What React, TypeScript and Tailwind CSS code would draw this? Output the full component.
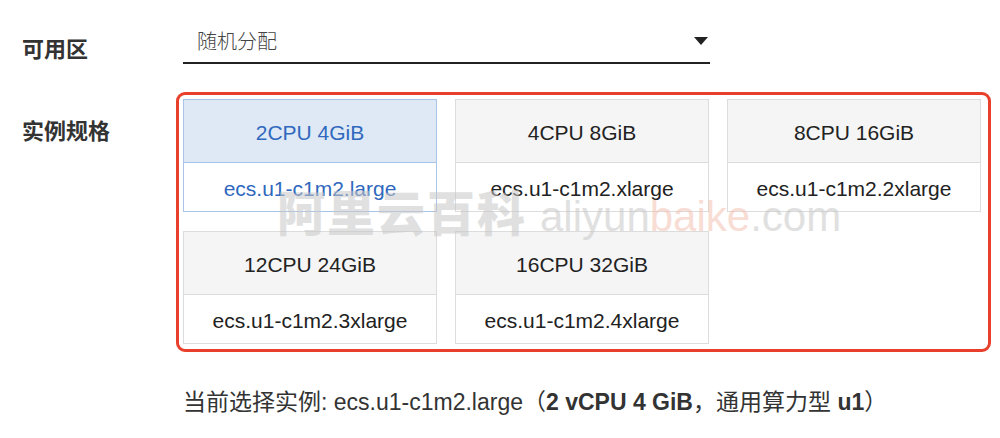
const specs = [
  { cpu: "2CPU 4GiB", name: "ecs.u1-c1m2.large", selected: true },
  { cpu: "4CPU 8GiB", name: "ecs.u1-c1m2.xlarge" },
  { cpu: "8CPU 16GiB", name: "ecs.u1-c1m2.2xlarge" },
  { cpu: "12CPU 24GiB", name: "ecs.u1-c1m2.3xlarge" },
  { cpu: "16CPU 32GiB", name: "ecs.u1-c1m2.4xlarge" },
];

const font = "font-['Liberation_Sans','Noto_Sans_CJK_SC',sans-serif]";

export default function App() {
  return (
    <div
      className={`relative w-[1000px] h-[438px] bg-white overflow-hidden ${font} text-[#333]`}
    >
      {/* Zone */}
      <div className="flex items-start pt-[24px]">
        <div className="w-[183px] pl-[22px] pt-[11px] text-[22px] font-bold text-[#333] leading-[30px]">
          可用区
        </div>
        <div className="w-[527px] h-[40px] border-b-2 border-[#222] flex items-center justify-between pl-[14px] pr-[2px] pb-[4px]">
          <span className="text-[20px] text-[#444] font-['Noto_Sans_CJK_SC',sans-serif] font-light">
            随机分配
          </span>
          <svg width="14" height="9" viewBox="0 0 14 9" aria-hidden="true">
            <path d="M0 0h14L7 8z" fill="#222" />
          </svg>
        </div>
      </div>

      {/* Instance type */}
      <div className="flex items-start mt-[27px]">
        <div className="w-[176px] pl-[22px] pt-[25px] text-[22px] font-bold leading-[30px]">
          实例规格
        </div>
        <div className="w-[815px] h-[260px] border-[3px] border-[#e8402a] rounded-[9px] pl-[4px] pt-[4px]">
          <div className="grid grid-cols-[254px_254px_254px] gap-x-[18px] gap-y-[19px]">
            {specs.map((s) => (
              <div
                key={s.name}
                className={`h-[113px] border flex flex-col ${
                  s.selected
                    ? "border-[#a9c4e6] text-[#2f68bd]"
                    : "border-[#dcdcdc] text-[#222]"
                }`}
              >
                <div
                  className={`h-[63px] flex items-center justify-center pt-[4px] text-[21px] border-b ${
                    s.selected
                      ? "bg-[#dfe9f6] border-[#a9c4e6]"
                      : "bg-[#f5f5f5] border-[#dcdcdc]"
                  }`}
                >
                  {s.cpu}
                </div>
                <div className="flex-1 flex items-center justify-center pt-[4px] text-[21px] bg-white">
                  {s.name}
                </div>
              </div>
            ))}
          </div>
        </div>
      </div>

      {/* Current selection */}
      <div className="pl-[183px] mt-[35px] text-[23px] text-[#333] leading-[30px]">
        当前选择实例: ecs.u1-c1m2.large（<span className="font-bold">2 vCPU 4 GiB</span>，通用算力型 <span className="font-bold">u1</span>）
      </div>

      {/* Watermark */}
      <div className="absolute left-[277px] top-[174px] flex items-baseline pointer-events-none select-none opacity-55">
        <span className="text-[48px] font-black text-[#c8c8c8] tracking-[2px] font-['Noto_Sans_CJK_SC',sans-serif]">
          阿里云百科
        </span>
        <span className="ml-[13px] text-[42px] text-[#c8c8c8] font-['Liberation_Sans',sans-serif]">
          aliyun<span className="text-[#f3c2b4]">baike</span>.com
        </span>
      </div>
    </div>
  );
}
